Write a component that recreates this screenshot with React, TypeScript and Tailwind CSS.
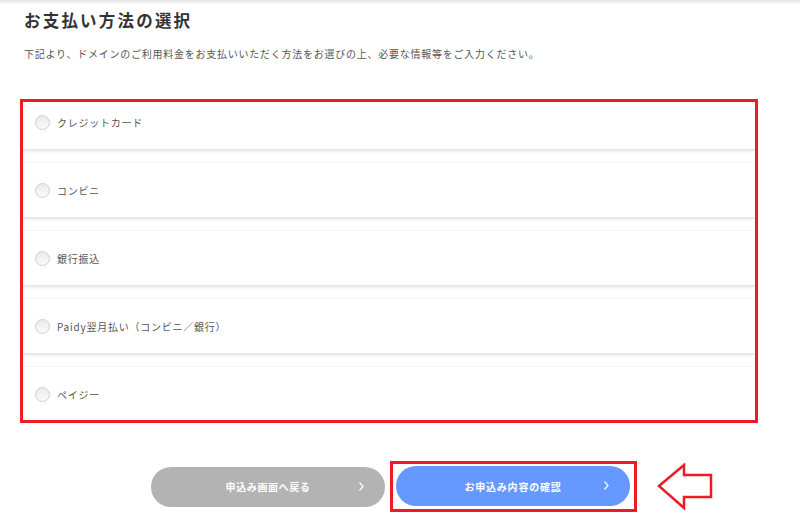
import React from 'react';

const methods = [
  'クレジットカード',
  'コンビニ',
  '銀行振込',
  'Paidy翌月払い（コンビニ／銀行）',
  'ペイジー',
];

const font = { fontFamily: '"Noto Sans CJK JP", "Noto Sans", sans-serif' };

const Chevron = () => (
  <svg width="7" height="11" viewBox="0 0 7 11" fill="none">
    <polyline points="1.5,1.5 5,5.5 1.5,9.5" stroke="#ffffff" strokeWidth="1.2" />
  </svg>
);

export default function App() {
  return (
    <div className="w-[800px] h-[529px] bg-white overflow-hidden" style={font}>
      {/* header shadow */}
      <div className="h-[5px] bg-gradient-to-b from-[#e6e6e6] to-white" />

      <div className="px-[24px]">
        <h1 className="mt-[3px] h-[24px] leading-[24px] text-[16.5px] font-bold tracking-[2.2px] text-[#333]">
          お支払い方法の選択
        </h1>
        <p className="mt-[14px] leading-[16px] text-[10px] tracking-[0.75px] text-[#555]">
          下記より、ドメインのご利用料金をお支払いいただく方法をお選びの上、必要な情報等をご入力ください。
        </p>
      </div>

      {/* payment methods */}
      <div className="ml-[20px] mt-[37px] w-[738px] h-[324px] border-[3px] border-[#ed1c24] overflow-hidden">
        <div className="-mt-[8px] flex flex-col gap-[13px]">
          {methods.map((m) => (
            <label
              key={m}
              className="flex h-[55px] shrink-0 items-center gap-[7px] border-t border-[#f6f6f6] bg-white pl-[12px] shadow-[0_2px_3px_rgba(0,0,0,0.13)]"
            >
              <span className="block h-[15px] w-[15px] shrink-0 rounded-full border border-[#cfcfcf] bg-gradient-to-b from-[#ebebeb] to-[#fafafa]" />
              <span className="text-[10px] tracking-[0.75px] text-[#555]">{m}</span>
            </label>
          ))}
        </div>
      </div>

      {/* buttons */}
      <div className="mt-[38px] flex items-center pl-[151px]">
        <button className="relative flex h-[40px] w-[234px] items-center justify-center rounded-full bg-[#b3b3b3] text-[10px] font-bold tracking-[0.6px] text-white">
          申込み画面へ戻る
          <span className="absolute right-[20px] top-[14px]">
            <Chevron />
          </span>
        </button>
        <div className="ml-[5px] border-[3px] border-[#ed1c24] pb-[3px] pl-[3px] pr-[4px] pt-[2px]">
          <button className="relative flex h-[40px] w-[234px] items-center justify-center rounded-full bg-[#6699ff] text-[10px] font-bold tracking-[0.8px] text-white">
            お申込み内容の確認
            <span className="absolute right-[20px] top-[14px]">
              <Chevron />
            </span>
          </button>
        </div>
        <svg className="ml-[20px]" width="56" height="48" viewBox="0 0 56 48" fill="none">
          <polygon
            points="2,23 27,2 27,12 54,12 54,34 27,34 27,45"
            stroke="#ed1c24"
            strokeWidth="2.5"
            strokeLinejoin="miter"
            fill="white"
          />
        </svg>
      </div>
    </div>
  );
}
